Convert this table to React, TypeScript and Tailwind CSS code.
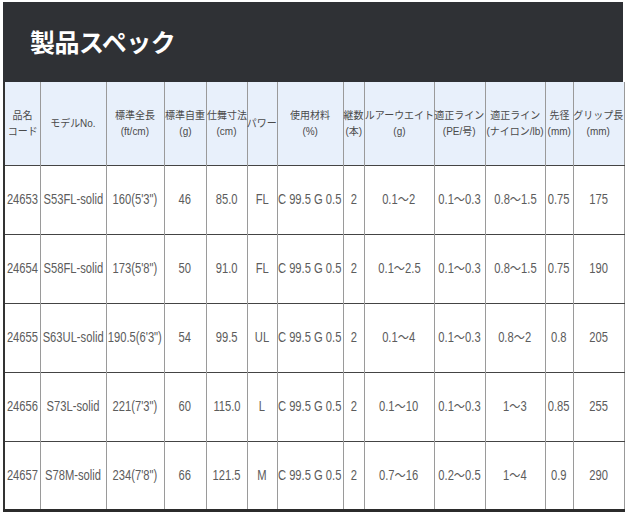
const heads = [
  ["品名", "コード"],
  ["モデルNo."],
  ["標準全長", "(ft/cm)"],
  ["標準自重", "(g)"],
  ["仕舞寸法", "(cm)"],
  ["パワー"],
  ["使用材料", "(%)"],
  ["継数", "(本)"],
  ["ルアーウエイト", "(g)"],
  ["適正ライン", "(PE/号)"],
  ["適正ライン", "(ナイロン/lb)"],
  ["先径", "(mm)"],
  ["グリップ長", "(mm)"],
];

const widths = [36, 66, 58, 42, 41, 30, 66, 21, 70, 51, 60, 28, 51];

const rows = [
  ["24653", "S53FL-solid", "160(5'3\")", "46", "85.0", "FL", "C 99.5 G 0.5", "2", "0.1～2", "0.1～0.3", "0.8～1.5", "0.75", "175"],
  ["24654", "S58FL-solid", "173(5'8\")", "50", "91.0", "FL", "C 99.5 G 0.5", "2", "0.1～2.5", "0.1～0.3", "0.8～1.5", "0.75", "190"],
  ["24655", "S63UL-solid", "190.5(6'3\")", "54", "99.5", "UL", "C 99.5 G 0.5", "2", "0.1～4", "0.1～0.3", "0.8～2", "0.8", "205"],
  ["24656", "S73L-solid", "221(7'3\")", "60", "115.0", "L", "C 99.5 G 0.5", "2", "0.1～10", "0.1～0.3", "1～3", "0.85", "255"],
  ["24657", "S78M-solid", "234(7'8\")", "66", "121.5", "M", "C 99.5 G 0.5", "2", "0.7～16", "0.2～0.5", "1～4", "0.9", "290"],
];

export default function App() {
  return (
    <div className="w-[626px] h-[516px] bg-white pl-[3px] pt-[2px]">
      <div className="w-[620px]">
        <div className="h-[80px] bg-[#2f3135] flex items-center pl-[27px]">
          <h1 className="text-white text-[25px] font-bold tracking-[-0.5px] font-['Noto_Sans_CJK_JP',sans-serif]">
            製品スペック
          </h1>
        </div>
        <table className="table-fixed w-[620px] border-collapse border-l-2 border-l-[#333] border-r border-r-[#999] border-b-[3px] border-b-[#2b2b2b] font-['Liberation_Sans','Noto_Sans_CJK_JP',sans-serif]">
          <colgroup>
            {widths.map((w, i) => (
              <col key={i} style={{ width: w }} />
            ))}
          </colgroup>
          <thead>
            <tr className="h-[83px] bg-[#e8f0fb] border-b border-b-[#444]">
              {heads.map((h, i) => (
                <th
                  key={i}
                  className="p-0 border-r border-r-[#9a9a9a] last:border-r-0 text-[10.5px] leading-[16px] font-normal text-[#4a4a4a]"
                >
                  {h.map((line, j) => (
                    <div key={j} className="flex justify-center whitespace-nowrap">
                      <span className="shrink-0 scale-x-[0.95]">{line}</span>
                    </div>
                  ))}
                </th>
              ))}
            </tr>
          </thead>
          <tbody>
            {rows.map((r, i) => (
              <tr key={i} className="h-[69px] border-b border-b-[#444] last:border-b-0">
                {r.map((c, j) => (
                  <td
                    key={j}
                    className="p-0 border-r border-r-[#9a9a9a] last:border-r-0 text-[14px] text-[#5c5c5c]"
                  >
                    <div className="flex justify-center whitespace-nowrap">
                      <span className="shrink-0 scale-x-[0.8]">{c}</span>
                    </div>
                  </td>
                ))}
              </tr>
            ))}
          </tbody>
        </table>
      </div>
    </div>
  );
}
